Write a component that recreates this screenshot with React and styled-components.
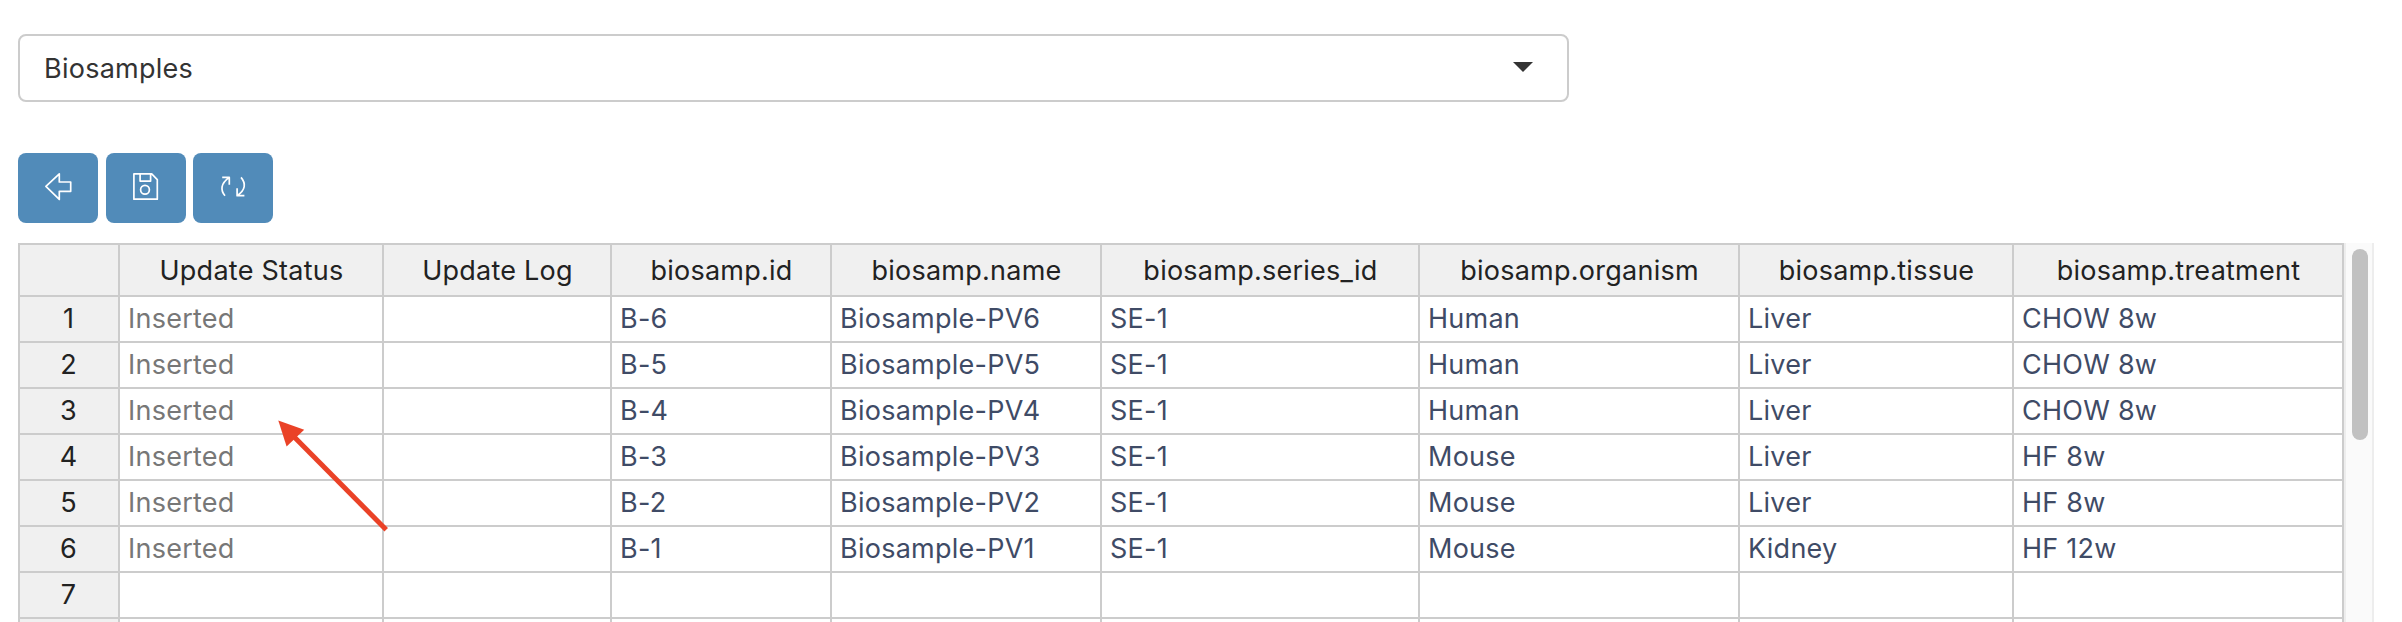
import React from 'react';
import styled, { createGlobalStyle } from 'styled-components';

const GlobalStyle = createGlobalStyle`
  * { box-sizing: border-box; }
  body {
    margin: 0;
    background: #fff;
    font-family: Inter, "Liberation Sans", sans-serif;
    font-size: 27px;
    letter-spacing: 0.25px;
  }
`;

const Page = styled.main`
  position: relative;
  display: flex;
  flex-direction: column;
  height: 622px;
  padding: 34px 28px 0 18px;
  overflow: hidden;
`;

const Select = styled.button`
  display: flex;
  align-items: center;
  justify-content: space-between;
  flex: none;
  width: 1551px;
  height: 68px;
  padding: 0 34px 0 24px;
  border: 2px solid #ccc;
  border-radius: 8px;
  background: #fff;
  color: #333;
  font: inherit;
  letter-spacing: inherit;
`;

const Caret = styled.span`
  border: 10px solid transparent;
  border-top-color: #333;
  border-bottom: 0;
  margin-bottom: 3px;
`;

const Toolbar = styled.div`
  display: flex;
  flex: none;
  gap: 7.5px;
  margin: 51px 0 20px;
`;

const ToolButton = styled.button`
  display: grid;
  place-items: center;
  width: 80px;
  height: 70px;
  padding: 0;
  border: 0;
  border-radius: 8px;
  background: #518bb9;
`;

const Icon = styled.svg`
  width: 32px;
  height: 32px;
  fill: none;
  stroke: #fff;
  stroke-width: 1.7;
  stroke-linejoin: round;
`;

const GridArea = styled.div`
  display: flex;
  flex: 1;
  min-height: 0;
`;

const Sheet = styled.div`
  width: 2326px;
  height: 100%;
  overflow: hidden;
`;

const Row = styled.div`
  display: grid;
  grid-template-columns: 102px 264px 228px 220px 270px 318px 320px 274px 330px;
  height: ${(p) => (p.$header ? 54 : 46)}px;
`;

const Cell = styled.div`
  display: flex;
  align-items: center;
  padding: 0 8px 2px;
  border: solid #ccc;
  border-width: 0 2px 2px 0;
  color: ${(p) => (p.$readOnly ? '#777' : '#3f4b66')};
  white-space: nowrap;
`;

const HeadCell = styled(Cell)`
  justify-content: center;
  padding: 0 0 0 1px;
  border-width: ${(p) => (p.$top ? 2 : 0)}px 2px 2px ${(p) => (p.$first ? 2 : 0)}px;
  background: #f0f0f0;
  color: #222;
`;

const RowNumber = styled(HeadCell)`
  padding: 0 1px 2px 0;
`;

const Track = styled.div`
  width: 30px;
  height: 100%;
  padding: 6px 0 0 6px;
  border: solid #ededed;
  border-width: 0 2px;
  background: #fafafa;
`;

const Thumb = styled.div`
  width: 16px;
  height: 191px;
  border-radius: 8px;
  background: #c1c1c1;
`;

const Pointer = styled.svg`
  position: absolute;
  left: 270px;
  top: 412px;
  width: 130px;
  height: 130px;
`;

const columns = [
  'Update Status', 'Update Log', 'biosamp.id', 'biosamp.name', 'biosamp.series_id',
  'biosamp.organism', 'biosamp.tissue', 'biosamp.treatment',
];

const rows = [
  ['Inserted', '', 'B-6', 'Biosample-PV6', 'SE-1', 'Human', 'Liver', 'CHOW 8w'],
  ['Inserted', '', 'B-5', 'Biosample-PV5', 'SE-1', 'Human', 'Liver', 'CHOW 8w'],
  ['Inserted', '', 'B-4', 'Biosample-PV4', 'SE-1', 'Human', 'Liver', 'CHOW 8w'],
  ['Inserted', '', 'B-3', 'Biosample-PV3', 'SE-1', 'Mouse', 'Liver', 'HF 8w'],
  ['Inserted', '', 'B-2', 'Biosample-PV2', 'SE-1', 'Mouse', 'Liver', 'HF 8w'],
  ['Inserted', '', 'B-1', 'Biosample-PV1', 'SE-1', 'Mouse', 'Kidney', 'HF 12w'],
  Array(8).fill(''),
];

export default function App() {
  return (
    <>
      <GlobalStyle />
      <Page>
        <Select>
          Biosamples
          <Caret />
        </Select>
        <Toolbar>
          <ToolButton aria-label="Back">
            <Icon viewBox="0 0 32 32">
              <path d="M3.9 14.4 17.3 1.8V10h11.4v9.3H17.3v8.1z" />
            </Icon>
          </ToolButton>
          <ToolButton aria-label="Save">
            <Icon viewBox="0 0 32 32">
              <path d="M3.9 1.9H21.7L27.3 7.7V27.2H3.9zM10.1 1.9V9.1H20.6V1.9" />
              <circle cx="15" cy="17.7" r="4.4" />
            </Icon>
          </ToolButton>
          <ToolButton aria-label="Refresh">
            <Icon viewBox="0 0 32 32">
              <path d="M8 23.8C3.4 18.5 3.5 11.5 12 5.6M5.2 5.4H12.3V12.8" />
              <path d="M24 5.4C29.2 11.5 28.5 18 20.4 23.5M20.1 16.2V23.7H27.4" />
            </Icon>
          </ToolButton>
        </Toolbar>
        <GridArea>
          <Sheet>
            <Row $header>
              <HeadCell $top $first />
              {columns.map((name) => (
                <HeadCell key={name} $top>{name}</HeadCell>
              ))}
            </Row>
            {rows.map((cells, r) => (
              <Row key={r}>
                <RowNumber $first>{r + 1}</RowNumber>
                {cells.map((text, c) => (
                  <Cell key={c} $readOnly={c < 2}>{text}</Cell>
                ))}
              </Row>
            ))}
            <Row>
              <RowNumber $first />
              {columns.map((name) => <Cell key={name} />)}
            </Row>
          </Sheet>
          <Track>
            <Thumb />
          </Track>
        </GridArea>
        <Pointer viewBox="270 412 130 130" aria-hidden="true">
          <path d="M294 436.8 386.2 529.7" stroke="#ea4227" strokeWidth="5" />
          <path d="M278.3 420.6 304.2 429.7 286.6 446.6z" fill="#ea4227" />
        </Pointer>
      </Page>
    </>
  );
}
